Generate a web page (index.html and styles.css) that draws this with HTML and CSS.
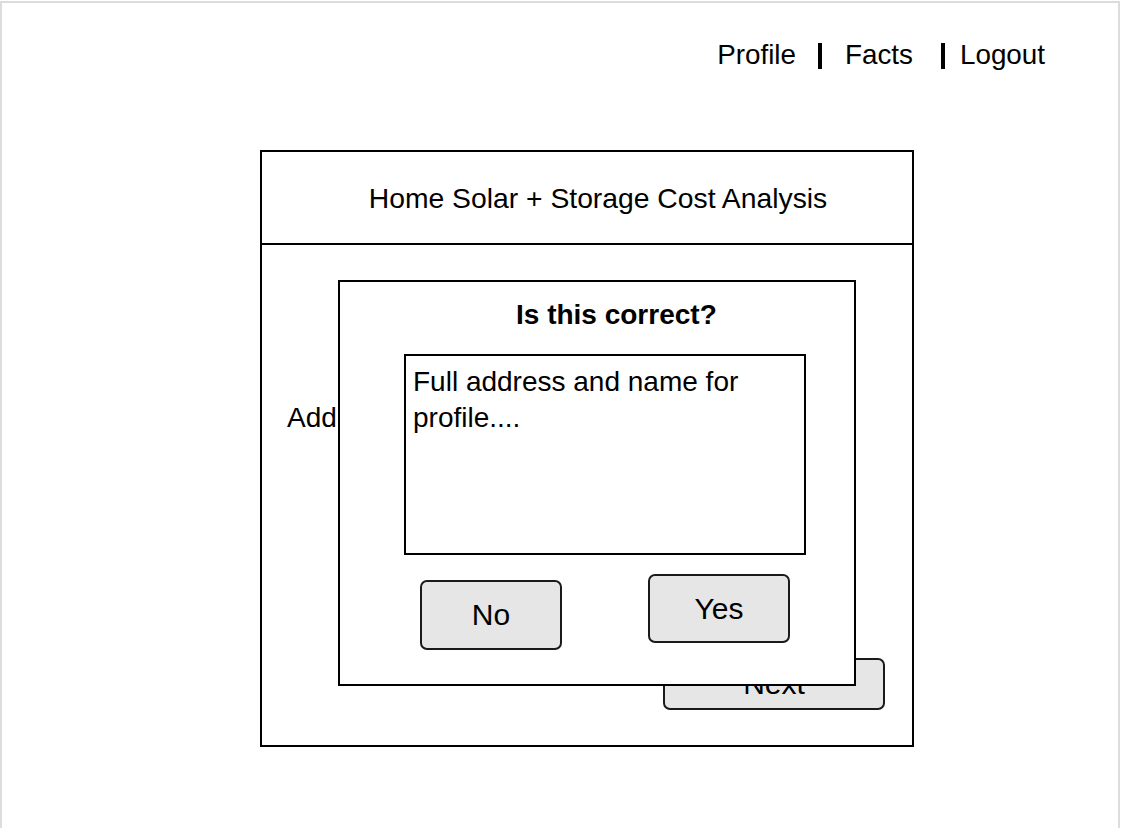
FILE: index.html
```html
<!DOCTYPE html>
<html>
<head>
<meta charset="utf-8">
<title>Home Solar + Storage Cost Analysis</title>
<link rel="stylesheet" href="styles.css">
</head>
<body>
<div class="frame">
  <nav class="nav">
    <a class="nav-link nav-profile" href="#">Profile</a>
    <span class="nav-bar bar-1"></span>
    <a class="nav-link nav-facts" href="#">Facts</a>
    <span class="nav-bar bar-2"></span>
    <a class="nav-link nav-logout" href="#">Logout</a>
  </nav>

  <main class="card">
    <header class="card-header">Home Solar + Storage Cost Analysis</header>
    <section class="card-body">
      <div class="field-label">Address:</div>
      <div class="actions">
        <button class="btn btn-next">Next</button>
      </div>

      <div class="dialog">
        <div class="dialog-title">Is this correct?</div>
        <div class="dialog-text">Full address and name for profile....</div>
        <div class="dialog-buttons">
          <button class="btn btn-no">No</button>
          <button class="btn btn-yes">Yes</button>
        </div>
      </div>
    </section>
  </main>
</div>
</body>
</html>
```
FILE: styles.css
```css
* { box-sizing: border-box; }

html, body {
  margin: 0;
  padding: 0;
  background: #ffffff;
}

body {
  font-family: "Liberation Sans", Arial, Helvetica, sans-serif;
  color: #000;
}

.frame {
  margin-top: 1px;
  width: 1120px;
  min-height: 827px;
  border: 2px solid #dcdcdc;
  border-bottom: none;
  overflow: hidden;
}

.nav {
  display: flex;
  justify-content: flex-end;
  align-items: flex-start;
  padding-top: 36px;
  padding-right: 73px;
  font-size: 27.8px;
  line-height: 32px;
}

.nav-link {
  color: #000;
  text-decoration: none;
}

.nav-bar {
  display: block;
  width: 4px;
  height: 26px;
  margin-top: 4px;
  background: #000;
}

.nav-profile { margin-right: 22px; }
.bar-1 { margin-right: 23px; }
.nav-facts { margin-right: 28px; }
.bar-2 { margin-right: 15px; }

.card {
  position: relative;
  margin-top: 79px;
  margin-left: 258px;
  width: 654px;
  height: 597px;
  border: 2px solid #000;
}

.card-header {
  height: 93px;
  border-bottom: 2px solid #000;
  display: flex;
  align-items: center;
  justify-content: center;
  padding-left: 22px;
  font-size: 28.3px;
  line-height: 32px;
}

.card-body {
  padding-top: 157px;
}

.field-label {
  padding-left: 25px;
  font-size: 28px;
  line-height: 32px;
}

.actions {
  display: flex;
  justify-content: flex-end;
  margin-top: 224px;
  padding-right: 27px;
}

.btn {
  font-family: "Liberation Sans", Arial, Helvetica, sans-serif;
  font-size: 30px;
  color: #000;
  background: #e6e6e6;
  border: 2px solid #1a1a1a;
  border-radius: 7px;
  padding: 0;
  display: flex;
  align-items: center;
  justify-content: center;
}

.btn-next {
  width: 222px;
  height: 52px;
}

.dialog {
  position: absolute;
  left: 76px;
  top: 128px;
  width: 518px;
  height: 406px;
  border: 2px solid #000;
  background: #fff;
}

.dialog-title {
  padding-top: 17px;
  padding-left: 176px;
  font-size: 28px;
  line-height: 32px;
  font-weight: bold;
}

.dialog-text {
  margin-top: 23px;
  margin-left: 64px;
  width: 402px;
  height: 201px;
  border: 2px solid #000;
  padding: 8px 6px 8px 7px;
  font-size: 28px;
  line-height: 36px;
}

.dialog-buttons {
  display: flex;
  align-items: flex-start;
  margin-top: 19px;
  padding-left: 80px;
}

.btn-no {
  width: 142px;
  height: 70px;
  margin-top: 6px;
  margin-right: 86px;
}

.btn-yes {
  width: 142px;
  height: 69px;
}
```
